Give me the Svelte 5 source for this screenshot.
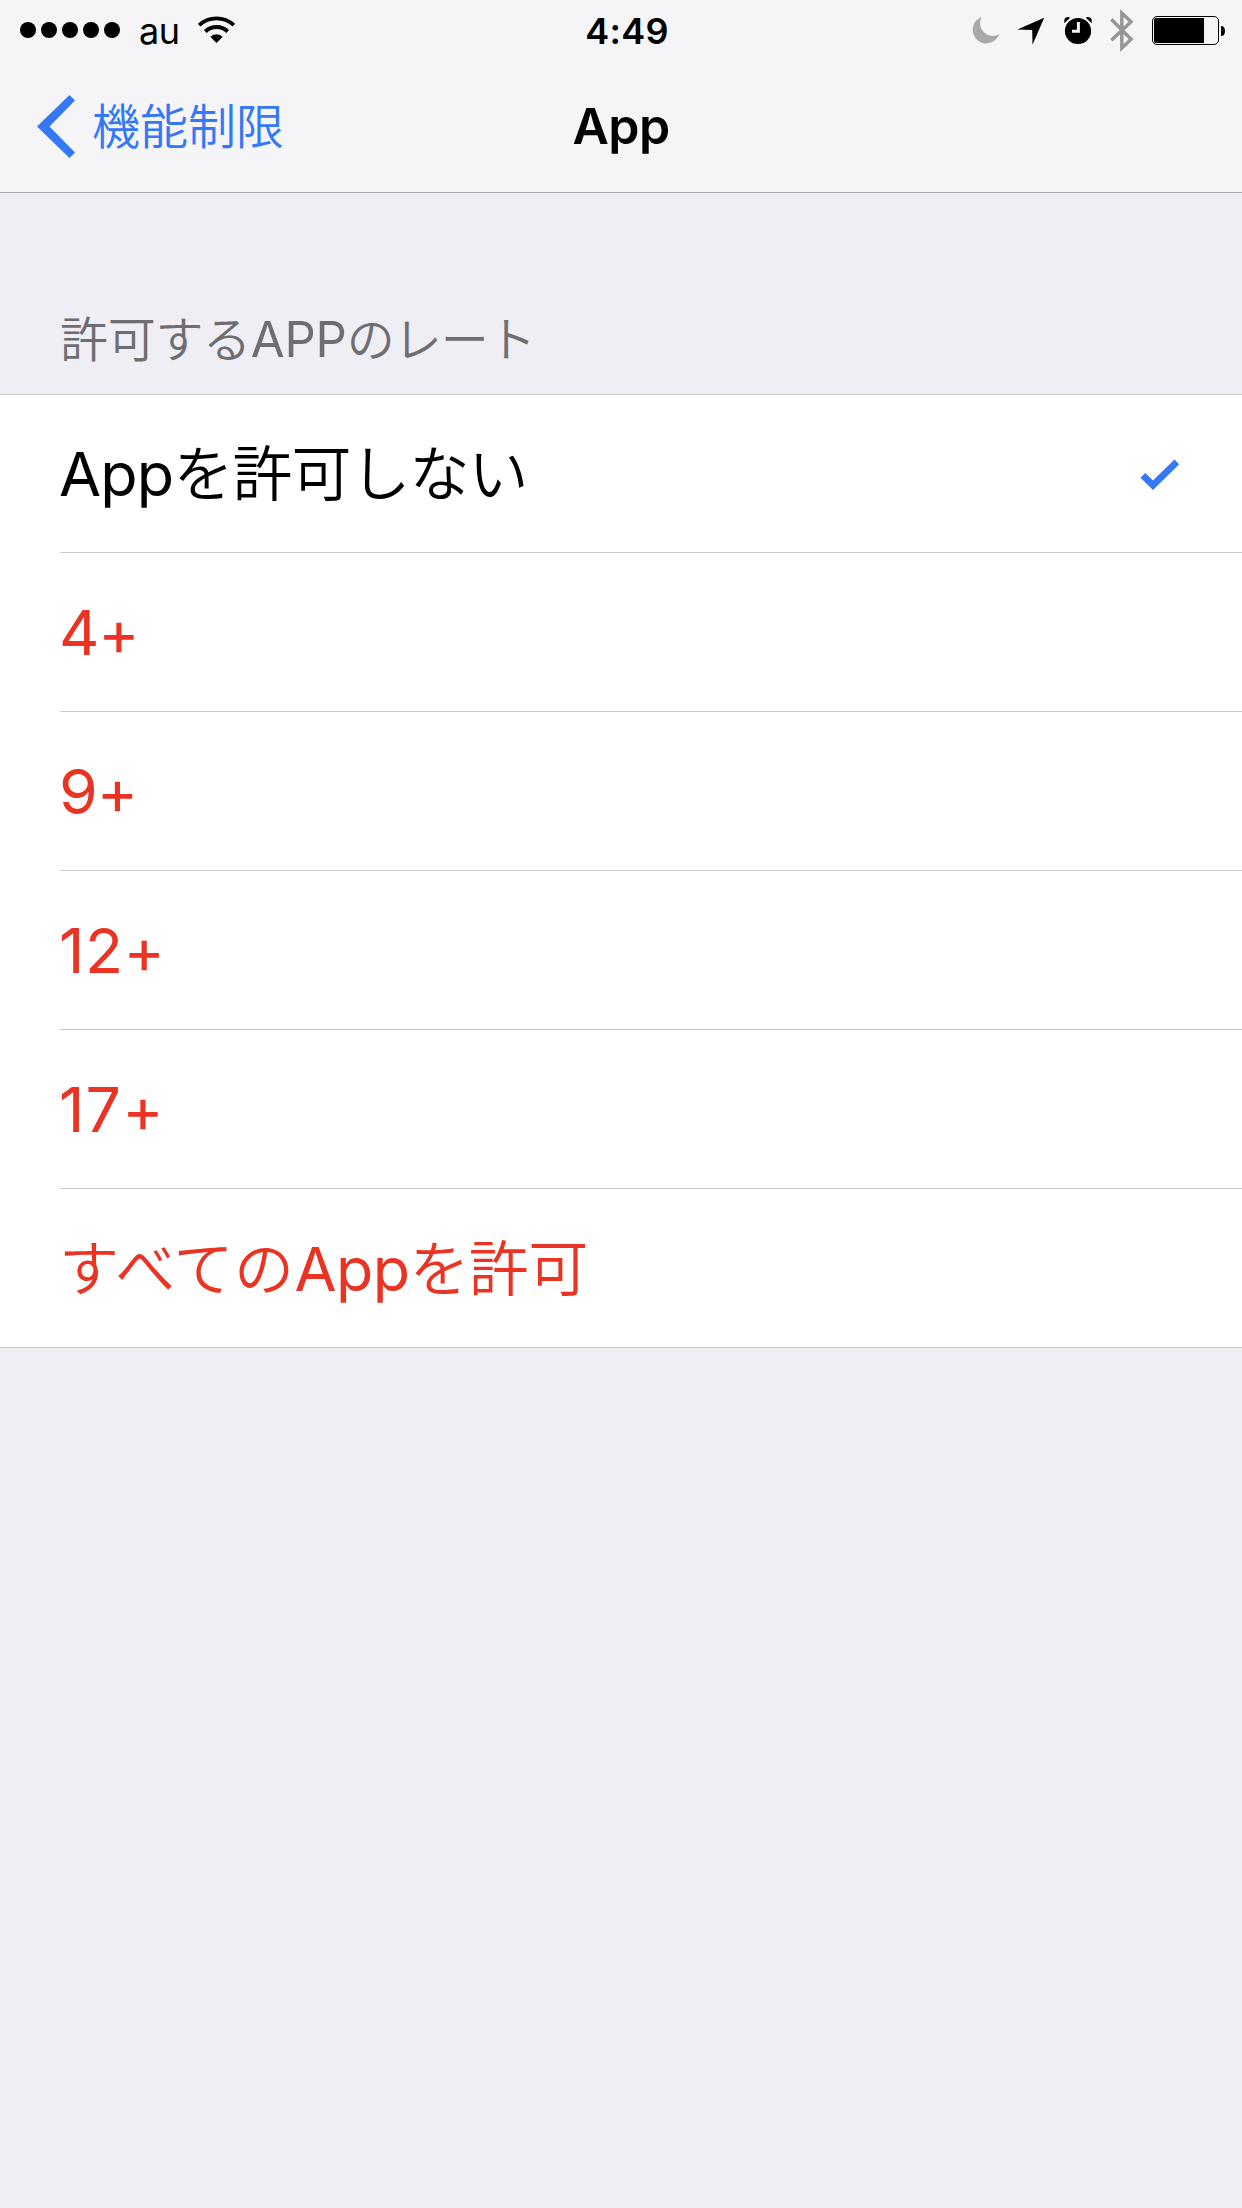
<script>
  const ratings = [
    { parts: [['App', 'latin'], ['を許可しない', 'cjk tight']], selected: true },
    { parts: [['4+', 'latin age']] },
    { parts: [['9+', 'latin age']] },
    { parts: [['12+', 'latin age teen']] },
    { parts: [['17+', 'latin age teen mature']] },
    { parts: [['すべての', 'cjk loose'], ['App', 'latin inner'], ['を許可', 'cjk closing']] }
  ];
  const dots = [8, 29, 50, 71, 92];
</script>

<div class="screen">
  <header>
    <div class="status">
      <div class="left">
        <svg width="100" height="16" viewBox="0 0 100 16">
          {#each dots as x}<circle cx={x} cy="8" r="8" />{/each}
        </svg>
        <span class="carrier">au</span>
        <svg class="wifi" width="38" height="28" viewBox="198 16 38 28">
          <path d="M199.2 25.2A25.3 25.3 0 0 1 233.8 25.2" fill="none" stroke="#000" stroke-width="3.8" />
          <path d="M205.3 31.5A16.1 16.1 0 0 1 227.7 31.5" fill="none" stroke="#000" stroke-width="3.9" />
          <path d="M216.5 43L210.3 36.8A8.8 8.8 0 0 1 222.7 36.8Z" />
        </svg>
      </div>
      <time>4:49</time>
      <svg class="indicators" width="256" height="44" viewBox="970 8 256 44">
        <path d="M981.7 17A13.6 13.6 0 1 0 999.2 34.2A12.7 12.7 0 0 1 981.7 17Z" fill="#a9a9ab" />
        <path d="M1017.3 29.6L1044.2 17.8L1032.5 44.7L1032.2 30Z" />
        <circle cx="1078" cy="31" r="13.1" />
        <path d="M1064.3 23.2V20.2Q1064.6 17 1068.5 17L1070.2 17.8ZM1091.7 23.2V20.2Q1091.4 17 1087.5 17L1085.8 17.8Z" />
        <path d="M1078.4 22V31.3H1072" fill="none" stroke="#f5f5f7" stroke-width="3" />
        <path d="M1111.3 19.3L1131.1 39.3L1121.8 48V13L1131.1 21.7L1111.3 40.3" fill="none" stroke="#969698" stroke-width="3.4" />
        <rect x="1152.5" y="16.5" width="66" height="28" rx="4.5" fill="none" stroke="#000" />
        <path d="M1156 18H1204V43H1156Q1154 43 1154 41V20Q1154 18 1156 18Z" />
        <path d="M1221 26C1223.8 26 1225 28 1225 31S1223.8 36 1221 36Z" />
      </svg>
    </div>
    <nav>
      <div class="back">
        <svg width="40" height="64" viewBox="36 94 40 64">
          <path d="M69.5 95L75 100.5L49.5 126.5L75 152.5L69.5 158L37 126.5Z" fill="#3478f6" />
        </svg>
        <span>機能制限</span>
      </div>
      <h1>App</h1>
    </nav>
  </header>

  <main>
    <h2><span class="lead">許可する</span><span class="caps">APP</span><span class="tail">のレート</span></h2>
    <ul>
      {#each ratings as row}
        <li class:selected={row.selected}>
          <div class="cell">
            <span class="label">{#each row.parts as [text, kind]}<span class={kind}>{text}</span>{/each}</span>
            {#if row.selected}
              <svg class="check" width="40" height="32" viewBox="1139.5 459 40 32">
                <path d="M1140 477.7L1144.7 473L1152.5 480.6L1174 459.6L1178.7 464.3L1152.5 490Z" fill="#3478f6" />
              </svg>
            {/if}
          </div>
        </li>
      {/each}
    </ul>
  </main>
</div>

<style>
  :global(body) { margin: 0; }
  .screen {
    width: 1242px;
    height: 2208px;
    overflow: hidden;
    background: #efeef4;
    color: #000;
    font-family: Inter, 'Noto Sans CJK JP', sans-serif;
  }
  svg { display: block; flex: none; }
  header {
    box-sizing: border-box;
    height: 193px;
    background: #f5f5f7;
    border-bottom: 1px solid #a7a7aa;
  }
  .status {
    display: grid;
    grid-template-columns: 1fr auto 1fr;
    align-items: center;
    height: 60px;
    padding: 0 16px 0 20px;
  }
  .left { display: flex; align-items: center; }
  .carrier { margin-left: 19px; font-size: 36px; line-height: 44px; padding-top: 2px; letter-spacing: -0.4px; }
  .wifi { margin-left: 18px; }
  time { font-size: 36px; line-height: 44px; font-weight: 600; padding: 2px 0 0 8px; letter-spacing: 0.2px; }
  .indicators { justify-self: end; }
  nav {
    display: grid;
    grid-template-columns: 1fr auto 1fr;
    align-items: center;
    height: 132px;
    padding: 0 36px;
  }
  .back { display: flex; align-items: center; gap: 16px; color: #3478f6; font-size: 48px; font-weight: 350; }
  .back span { padding-bottom: 6px; }
  h1 { margin: 0; font-size: 50px; line-height: 60px; font-weight: 600; letter-spacing: -0.6px; }
  h2 {
    box-sizing: border-box;
    height: 201px;
    margin: 0;
    padding: 112px 60px 0;
    font-size: 48px;
    line-height: 70px;
    font-weight: 350;
    color: #6d6d72;
  }
  .lead { letter-spacing: -0.3px; }
  .tail { letter-spacing: -0.9px; }
  .caps { font-size: 49px; font-weight: 400; letter-spacing: -0.2px; }
  ul {
    margin: 0;
    padding: 0 0 0 60px;
    list-style: none;
    background: #fff;
    border-top: 1px solid #c8c7cc;
    border-bottom: 1px solid #c8c7cc;
  }
  .cell {
    display: flex;
    align-items: center;
    justify-content: space-between;
    height: 158px;
    padding: 1px 62px 0 0;
    box-sizing: border-box;
  }
  li { color: #ea3323; }
  li.selected { color: #000; }
  li.selected .cell { height: 157px; }
  li + li { border-top: 1px solid #c8c7cc; }
  .check { margin-top: 2px; }
  .label { margin-left: -1px; font-size: 60px; line-height: 80px; white-space: nowrap; }
  .latin { font-size: 61px; font-weight: 380; letter-spacing: -0.8px; }
  .latin.age { font-size: 62.5px; letter-spacing: -1px; font-feature-settings: 'calt' 0; }
  .latin.teen { letter-spacing: 0.5px; }
  .latin.mature { letter-spacing: 1.2px; }
  .latin.inner { letter-spacing: -0.6px; }
  .cjk { font-weight: 350; }
  .cjk.loose { letter-spacing: 0.5px; }
  .cjk.tight { letter-spacing: -1px; }
  .cjk.closing { letter-spacing: -0.6px; }
</style>
